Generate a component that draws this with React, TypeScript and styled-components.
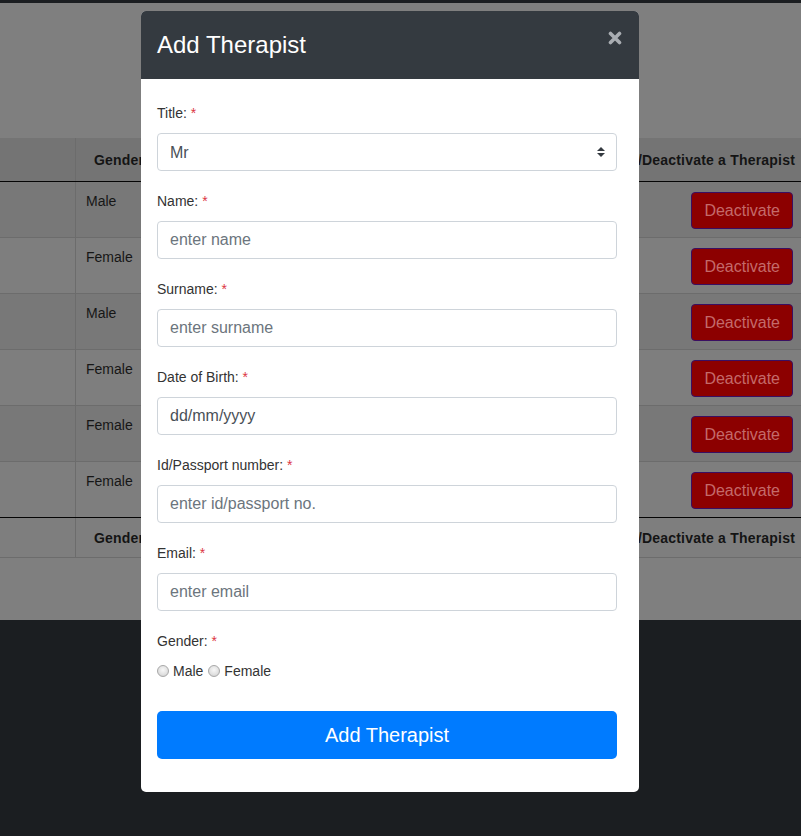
import React from "react";
import styled, { createGlobalStyle } from "styled-components";

const Global = createGlobalStyle`
  html, body { margin: 0; padding: 0; }
  body {
    background: #1b1e21;
    font-family: "Liberation Sans", Arial, sans-serif;
    overflow: hidden;
  }
  *, *::before, *::after { box-sizing: border-box; }
`;

const Page = styled.div`
  display: flex;
  flex-direction: column;
  min-height: 836px;
  background: #7f7f7f;
`;

const NavStrip = styled.div`
  height: 3px;
  background: #1b1e21;
`;

const Main = styled.main`
  height: 617px;
  padding-top: 135px;
`;

const Footer = styled.footer`
  flex: 1;
  min-height: 216px;
  background: #1b1e21;
`;

const Table = styled.div`
  display: flex;
  flex-direction: column;
  width: 801px;
`;

type RowKind = "head" | "odd" | "even" | "foot";

const Row = styled.div<{ $kind: RowKind; $last?: boolean }>`
  display: grid;
  grid-template-columns: 76px 110px 1fr 228px;
  height: ${(p) => (p.$kind === "head" ? 44 : p.$kind === "foot" ? 40 : 56)}px;
  background: ${(p) =>
    p.$kind === "head" ? "#747474" : p.$kind === "odd" ? "#787878" : "#7e7e7e"};
  border-bottom: 1px solid
    ${(p) => (p.$kind === "head" || p.$last ? "#050505" : "#6c6c6c")};
`;

const Cell = styled.div<{ $divider?: boolean; $right?: boolean }>`
  display: flex;
  align-items: flex-start;
  justify-content: ${(p) => (p.$right ? "flex-end" : "flex-start")};
  padding: 9px ${(p) => (p.$right ? 8 : 10)}px 0 10px;
  font-size: 14px;
  line-height: 20px;
  color: #161616;
  border-right: ${(p) => (p.$divider ? "1px solid #6c6c6c" : "none")};
`;

const ButtonCell = styled(Cell)`
  padding-top: 10px;
`;

const HeadCell = styled.div<{ $divider?: boolean; $right?: boolean }>`
  display: flex;
  align-items: center;
  justify-content: ${(p) => (p.$right ? "flex-end" : "flex-start")};
  padding: 0 ${(p) => (p.$right ? 6 : 10)}px 0 ${(p) => (p.$right ? 0 : 18)}px;
  font-size: 14px;
  font-weight: 700;
  letter-spacing: 0.2px;
  color: #141414;
  white-space: nowrap;
  overflow: hidden;
  border-right: ${(p) => (p.$divider ? "1px solid #6c6c6c" : "none")};
`;

const DeactivateButton = styled.button`
  height: 37px;
  padding: 0 12px;
  background: #8c0000;
  border: 1px solid #3a0f62;
  border-radius: 4px;
  color: #c46a6a;
  font-family: "Liberation Sans", Arial, sans-serif;
  font-size: 16px;
`;

/* ---------- modal ---------- */

const Backdrop = styled.div`
  position: fixed;
  inset: 0;
  padding: 11px 0 0 141px;
`;

const Modal = styled.div`
  width: 498px;
  background: #ffffff;
  border-radius: 5px;
  overflow: hidden;
`;

const ModalHeader = styled.div`
  display: flex;
  justify-content: space-between;
  align-items: center;
  height: 68px;
  padding: 0 17px 0 16px;
  background: #343a40;
`;

const ModalTitle = styled.h4`
  margin: 0;
  font-size: 24px;
  font-weight: 400;
  line-height: 36px;
  color: #ffffff;
`;

const CloseButton = styled.button`
  align-self: flex-start;
  margin-top: 20px;
  width: 14px;
  height: 14px;
  padding: 0;
  border: none;
  background: transparent;
  display: flex;
`;

const ModalBody = styled.form`
  padding: 24px 22px 33px 16px;
`;

const FormGroup = styled.div`
  margin-bottom: 20px;
`;

const Label = styled.label`
  display: block;
  height: 20px;
  margin-bottom: 10px;
  font-size: 14px;
  line-height: 20px;
  color: #333333;
`;

const Required = styled.span`
  color: #dc3545;
`;

const Input = styled.input<{ $dark?: boolean }>`
  display: block;
  width: 100%;
  height: 38px;
  padding: 0 12px;
  border: 1px solid #ced4da;
  border-radius: 4px;
  font-family: "Liberation Sans", Arial, sans-serif;
  font-size: 16px;
  color: #495057;
  outline: none;
  &::placeholder {
    color: ${(p) => (p.$dark ? "#495057" : "#6c757d")};
    opacity: 1;
  }
`;

const SelectWrap = styled.div`
  position: relative;
`;

const Select = styled.select`
  display: block;
  width: 100%;
  height: 38px;
  padding: 0 12px;
  border: 1px solid #ced4da;
  border-radius: 4px;
  background: #ffffff;
  appearance: none;
  -webkit-appearance: none;
  font-family: "Liberation Sans", Arial, sans-serif;
  font-size: 16px;
  color: #495057;
  outline: none;
`;

const SelectArrow = styled.svg`
  position: absolute;
  right: 12px;
  top: 14px;
  pointer-events: none;
`;

const RadioRow = styled.div`
  display: flex;
  align-items: center;
  height: 20px;
`;

const RadioLabel = styled.label`
  display: inline-flex;
  align-items: center;
  margin-right: 5px;
  font-size: 14px;
  color: #333333;
`;

const Radio = styled.input`
  appearance: none;
  -webkit-appearance: none;
  width: 12px;
  height: 12px;
  margin: 0 4px 0 0;
  border-radius: 50%;
  border: 1px solid #a8a8a8;
  background: radial-gradient(circle at 50% 40%, #f7f7f7 0%, #e2e2e2 55%, #c9c9c9 100%);
`;

const SubmitButton = styled.button`
  display: block;
  width: 100%;
  height: 48px;
  margin-top: 30px;
  border: none;
  border-radius: 5px;
  background: #007bff;
  color: #ffffff;
  font-family: "Liberation Sans", Arial, sans-serif;
  font-size: 20px;
`;

const genders = ["Male", "Female", "Male", "Female", "Female", "Female"];

const fields = [
  { label: "Name", placeholder: "enter name" },
  { label: "Surname", placeholder: "enter surname" },
  { label: "Date of Birth", placeholder: "dd/mm/yyyy", dark: true },
  { label: "Id/Passport number", placeholder: "enter id/passport no." },
  { label: "Email", placeholder: "enter email" },
];

export default function App() {
  return (
    <>
      <Global />
      <Page>
        <NavStrip />
        <Main>
          <Table>
            <Row $kind="head">
              <HeadCell $divider />
              <HeadCell>Gender</HeadCell>
              <HeadCell />
              <HeadCell $right>Activate/Deactivate a Therapist</HeadCell>
            </Row>
            {genders.map((g, i) => (
              <Row key={i} $kind={i % 2 === 0 ? "odd" : "even"} $last={i === genders.length - 1}>
                <Cell $divider />
                <Cell>{g}</Cell>
                <Cell />
                <ButtonCell $right>
                  <DeactivateButton type="button">Deactivate</DeactivateButton>
                </ButtonCell>
              </Row>
            ))}
            <Row $kind="foot">
              <HeadCell $divider />
              <HeadCell>Gender</HeadCell>
              <HeadCell />
              <HeadCell $right>Activate/Deactivate a Therapist</HeadCell>
            </Row>
          </Table>
        </Main>
        <Footer />
      </Page>

      <Backdrop>
        <Modal role="dialog">
          <ModalHeader>
            <ModalTitle>Add Therapist</ModalTitle>
            <CloseButton type="button" aria-label="Close">
              <svg width="14" height="14" viewBox="0 0 14 14">
                <path
                  d="M2.5 2.5 L11.5 11.5 M11.5 2.5 L2.5 11.5"
                  stroke="#a9adb2"
                  strokeWidth="3.6"
                  strokeLinecap="round"
                />
              </svg>
            </CloseButton>
          </ModalHeader>
          <ModalBody onSubmit={(e) => e.preventDefault()}>
            <FormGroup>
              <Label>
                Title: <Required>*</Required>
              </Label>
              <SelectWrap>
                <Select defaultValue="Mr">
                  <option>Mr</option>
                  <option>Mrs</option>
                  <option>Ms</option>
                  <option>Dr</option>
                </Select>
                <SelectArrow width="8" height="10" viewBox="0 0 4 5">
                  <path d="M2 0L0 2h4zm0 5L0 3h4z" fill="#343a40" />
                </SelectArrow>
              </SelectWrap>
            </FormGroup>
            {fields.map((f) => (
              <FormGroup key={f.label}>
                <Label>
                  {f.label}: <Required>*</Required>
                </Label>
                <Input type="text" placeholder={f.placeholder} $dark={f.dark} />
              </FormGroup>
            ))}
            <Label>
              Gender: <Required>*</Required>
            </Label>
            <RadioRow>
              <RadioLabel>
                <Radio type="radio" name="gender" />
                Male
              </RadioLabel>
              <RadioLabel>
                <Radio type="radio" name="gender" />
                Female
              </RadioLabel>
            </RadioRow>
            <SubmitButton type="submit">Add Therapist</SubmitButton>
          </ModalBody>
        </Modal>
      </Backdrop>
    </>
  );
}
